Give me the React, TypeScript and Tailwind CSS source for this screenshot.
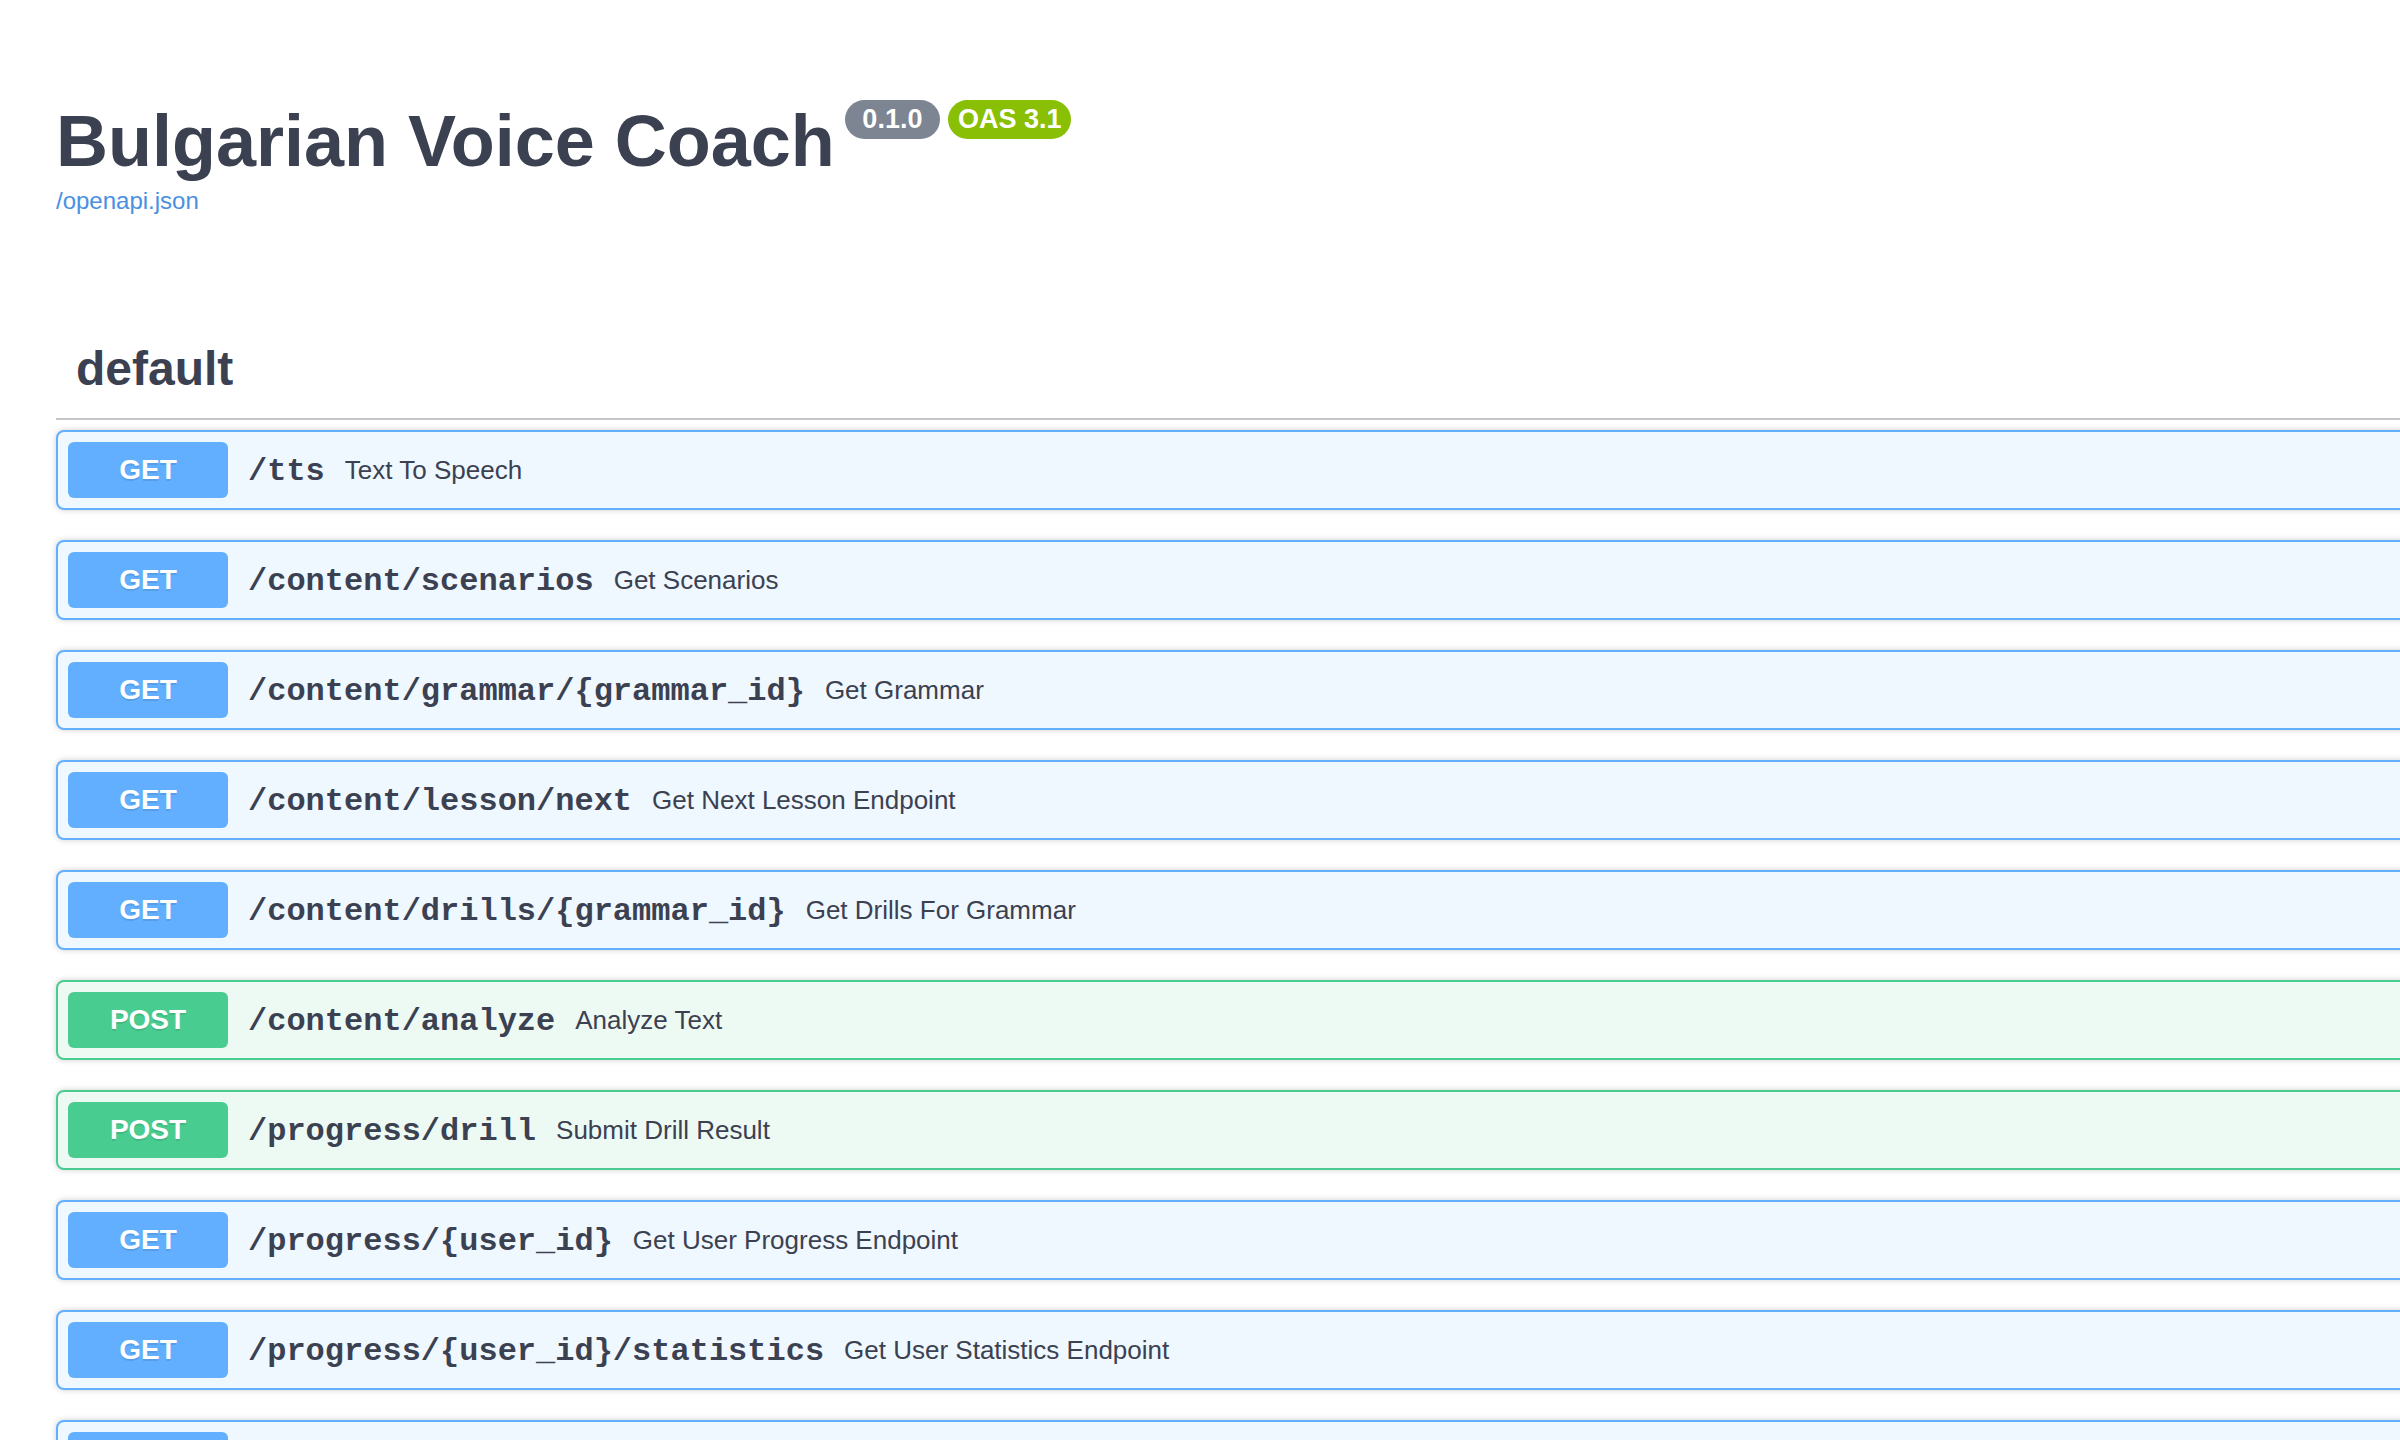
import React from "react";

type Op = { method: "GET" | "POST"; path: string; summary: string };

const ops: Op[] = [
  { method: "GET", path: "/tts", summary: "Text To Speech" },
  { method: "GET", path: "/content/scenarios", summary: "Get Scenarios" },
  { method: "GET", path: "/content/grammar/{grammar_id}", summary: "Get Grammar" },
  { method: "GET", path: "/content/lesson/next", summary: "Get Next Lesson Endpoint" },
  { method: "GET", path: "/content/drills/{grammar_id}", summary: "Get Drills For Grammar" },
  { method: "POST", path: "/content/analyze", summary: "Analyze Text" },
  { method: "POST", path: "/progress/drill", summary: "Submit Drill Result" },
  { method: "GET", path: "/progress/{user_id}", summary: "Get User Progress Endpoint" },
  { method: "GET", path: "/progress/{user_id}/statistics", summary: "Get User Statistics Endpoint" },
];

function OpBlock({ op }: { op: Op }) {
  const isGet = op.method === "GET";
  return (
    <div
      className={
        isGet
          ? "mb-[30px] flex h-[80px] items-center rounded-[8px] border-2 border-[#61affe] bg-[#eff7ff] px-[10px] shadow-[0_0_6px_rgba(0,0,0,0.19)]"
          : "mb-[30px] flex h-[80px] items-center rounded-[8px] border-2 border-[#49cc90] bg-[#edfaf4] px-[10px] shadow-[0_0_6px_rgba(0,0,0,0.19)]"
      }
    >
      <div
        className={
          isGet
            ? "flex h-[56px] w-[160px] shrink-0 items-center justify-center rounded-[6px] bg-[#61affe] text-[28px] font-bold text-white [text-shadow:0_2px_0_rgba(0,0,0,0.1)] font-['Liberation_Sans',Arial,sans-serif]"
            : "flex h-[56px] w-[160px] shrink-0 items-center justify-center rounded-[6px] bg-[#49cc90] text-[28px] font-bold text-white [text-shadow:0_2px_0_rgba(0,0,0,0.1)] font-['Liberation_Sans',Arial,sans-serif]"
        }
      >
        {op.method}
      </div>
      <span className="px-[20px] pt-[3px] text-[32px] font-bold text-[#3b4151] font-['Liberation_Mono','Courier_New',monospace] whitespace-nowrap">
        {op.path}
      </span>
      <span className="pt-[1px] text-[26px] text-[#3b4151] font-['Liberation_Sans',Arial,sans-serif] whitespace-nowrap">
        {op.summary}
      </span>
    </div>
  );
}

export default function App() {
  return (
    <div className="h-[1440px] w-full overflow-hidden bg-white font-['Liberation_Sans',Arial,sans-serif] text-[#3b4151]">
      <div className="w-[2480px] pl-[56px] pt-[100px]">
        <div className="flex items-start">
          <h2 className="text-[72px] font-bold leading-[82px] text-[#3b4151]">
            Bulgarian Voice Coach
          </h2>
          <span className="ml-[10px] rounded-full bg-[#7d8492] px-[10px] py-[4px] text-[27px] font-bold leading-[31px] text-white whitespace-pre">
            {" 0.1.0 "}
          </span>
          <span className="ml-[8px] rounded-full bg-[#89bf04] px-[10px] py-[4px] text-[27px] font-bold leading-[31px] text-white whitespace-nowrap">
            OAS 3.1
          </span>
        </div>
        <a className="mt-[5px] block text-[24px] leading-[28px] text-[#4990e2]" href="#">
          /openapi.json
        </a>

        <div className="mb-[10px] mt-[104px] flex items-center border-b-2 border-[#c4c6cb] pb-[22px] pl-[20px] pt-[22px]">
          <h3 className="text-[48px] font-bold leading-[55px] text-[#3b4151]">default</h3>
        </div>

        <div>
          {ops.map((op, i) => (
            <OpBlock key={i} op={op} />
          ))}
          <div className="flex h-[80px] items-start rounded-[8px] border-2 border-[#61affe] bg-[#eff7ff] px-[10px] pt-[10px] shadow-[0_0_6px_rgba(0,0,0,0.19)]">
            <div className="h-[56px] w-[160px] shrink-0 rounded-[6px] bg-[#61affe]" />
          </div>
        </div>
      </div>
    </div>
  );
}
